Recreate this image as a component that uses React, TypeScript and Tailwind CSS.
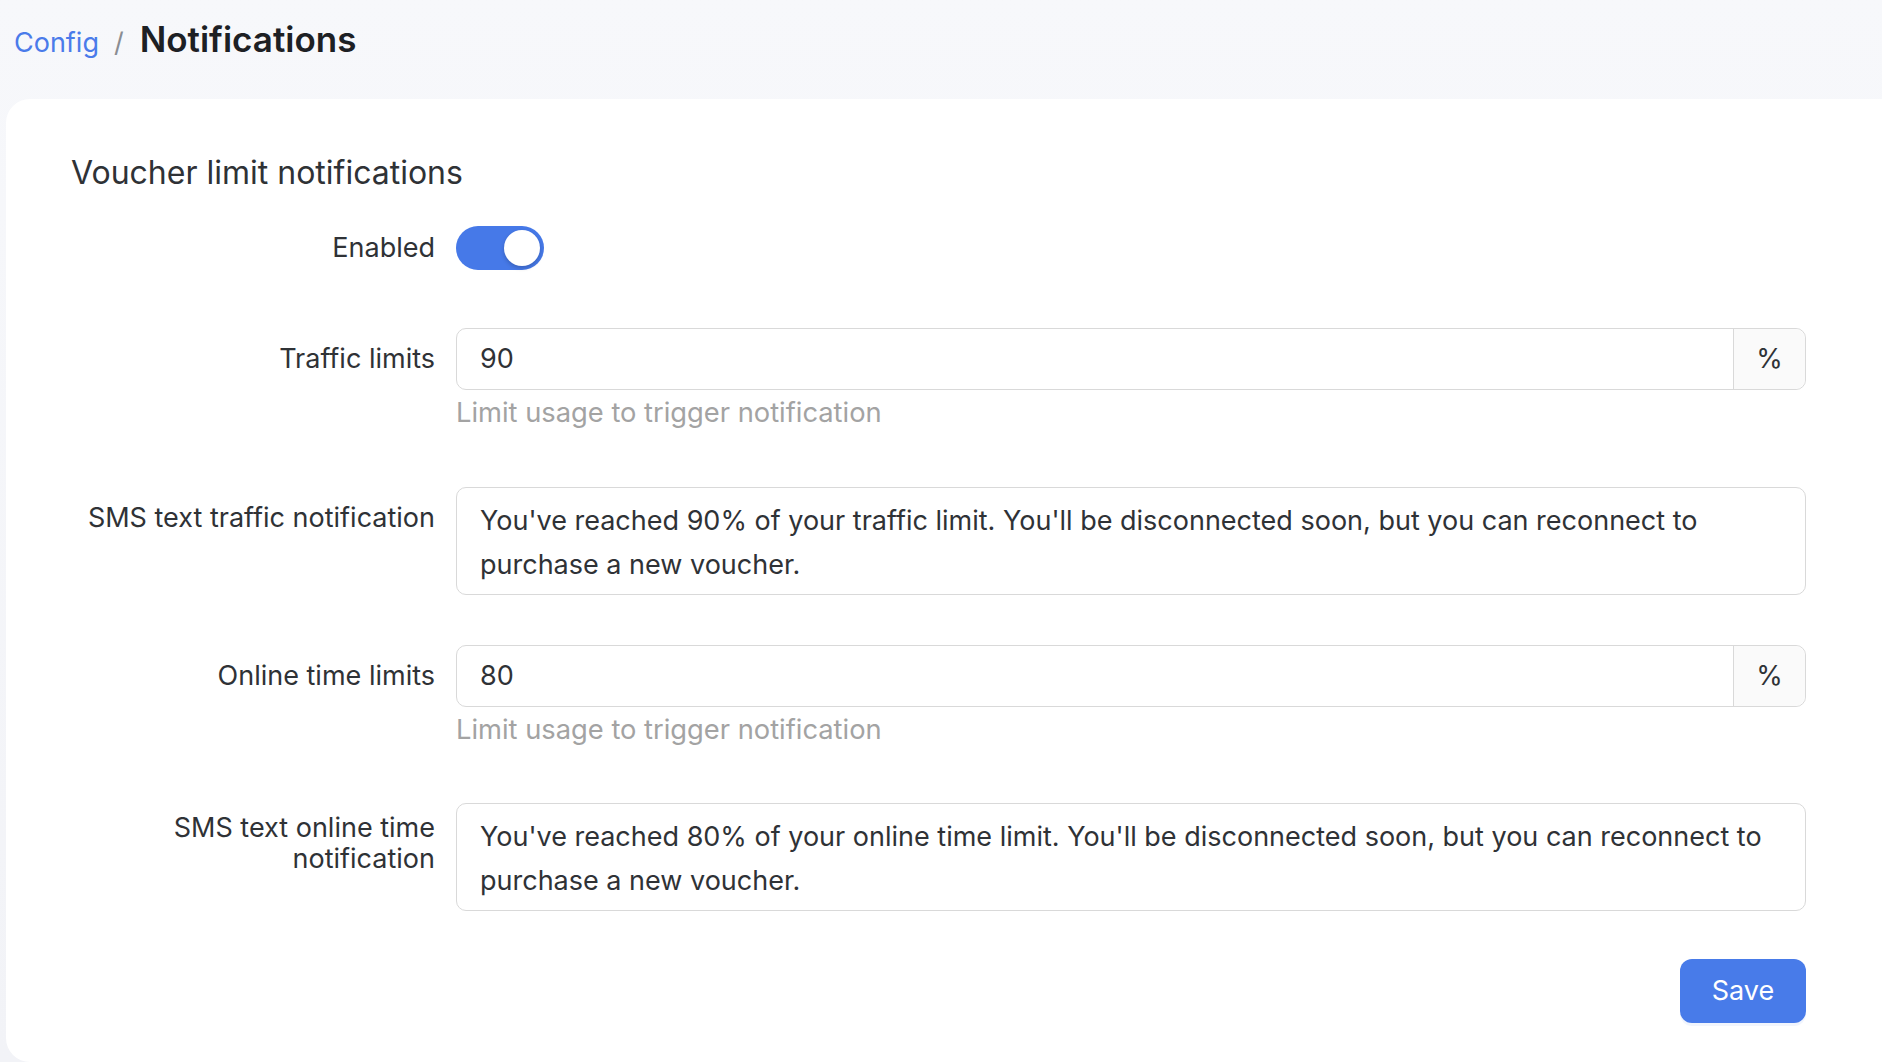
export default function App() {
  return (
    <div className="min-h-screen bg-gradient-to-b from-[#f7f8fb] to-[#f2f3f7] font-['Inter',sans-serif] text-[#2f3236]">
      <div className="flex h-[99px] items-start px-[14px] pt-[15px]">
        <nav className="flex items-baseline">
          <a className="text-[27px] leading-[48px] text-[#4a7bea]">Config</a>
          <span className="ml-[15px] mr-[16px] text-[27px] text-[#8a8d92]">/</span>
          <h1 className="text-[35px] font-semibold leading-[48px] text-[#1d2024]">Notifications</h1>
        </nav>
      </div>

      <div className="ml-[6px] rounded-l-[24px] bg-white pb-[39px] pl-[65px] pr-[76px] pt-[56px]">
        <h2 className="text-[32px] leading-[36px] text-[#2f3236]">Voucher limit notifications</h2>

        <div className="mt-[35px] grid grid-cols-[364px_1fr] gap-x-[21px]">
          <label className="flex h-[44px] items-center justify-end text-[27px]">Enabled</label>
          <div className="flex h-[44px]">
            <button className="relative h-[44px] w-[88px] rounded-full bg-[#4679e8]">
              <span className="absolute right-[4px] top-[4px] h-[36px] w-[36px] rounded-full bg-white shadow-[0_2px_4px_rgba(0,0,0,0.2)]" />
            </button>
          </div>
        </div>

        <div className="mt-[58px] grid grid-cols-[364px_1fr] gap-x-[21px]">
          <label className="flex h-[62px] items-center justify-end text-[27px]">Traffic limits</label>
          <div>
            <div className="flex h-[62px] rounded-[10px] border border-[#d9d9d9]">
              <div className="flex flex-1 items-center px-[23px] text-[27px]">90</div>
              <div className="flex w-[72px] items-center justify-center rounded-r-[10px] border-l border-[#d9d9d9] bg-[#fafafa] text-[27px]">%</div>
            </div>
            <p className="mt-[6px] text-[27.3px] leading-[34px] text-[#a3a3a3]">Limit usage to trigger notification</p>
          </div>
        </div>

        <div className="mt-[57px] grid grid-cols-[364px_1fr] gap-x-[21px]">
          <label className="flex h-[62px] items-center justify-end text-right text-[27px]">SMS text traffic notification</label>
          <div className="rounded-[10px] border border-[#d9d9d9] pb-[7px] pl-[23px] pr-[20px] pt-[11px] text-[27px] leading-[44px]">
            You've reached 90% of your traffic limit. You'll be disconnected soon, but you can reconnect to purchase a new voucher.
          </div>
        </div>

        <div className="mt-[50px] grid grid-cols-[364px_1fr] gap-x-[21px]">
          <label className="flex h-[62px] items-center justify-end text-[27px]">Online time limits</label>
          <div>
            <div className="flex h-[62px] rounded-[10px] border border-[#d9d9d9]">
              <div className="flex flex-1 items-center px-[23px] text-[27px]">80</div>
              <div className="flex w-[72px] items-center justify-center rounded-r-[10px] border-l border-[#d9d9d9] bg-[#fafafa] text-[27px]">%</div>
            </div>
            <p className="mt-[6px] text-[27.3px] leading-[34px] text-[#a3a3a3]">Limit usage to trigger notification</p>
          </div>
        </div>

        <div className="mt-[56px] grid grid-cols-[364px_1fr] gap-x-[21px]">
          <label className="mt-[9px] flex h-[62px] items-center justify-end text-right text-[27px] leading-[31px]">
            SMS text online time notification
          </label>
          <div className="rounded-[10px] border border-[#d9d9d9] pb-[7px] pl-[23px] pr-[20px] pt-[11px] text-[27px] leading-[44px]">
            You've reached 80% of your online time limit. You'll be disconnected soon, but you can reconnect to purchase a new voucher.
          </div>
        </div>

        <div className="mt-[48px] flex justify-end">
          <button className="h-[64px] w-[126px] rounded-[12px] bg-[#487be9] text-[27px] text-white shadow-[0_3px_0_rgba(72,123,233,0.08)]">
            Save
          </button>
        </div>
      </div>
    </div>
  );
}
